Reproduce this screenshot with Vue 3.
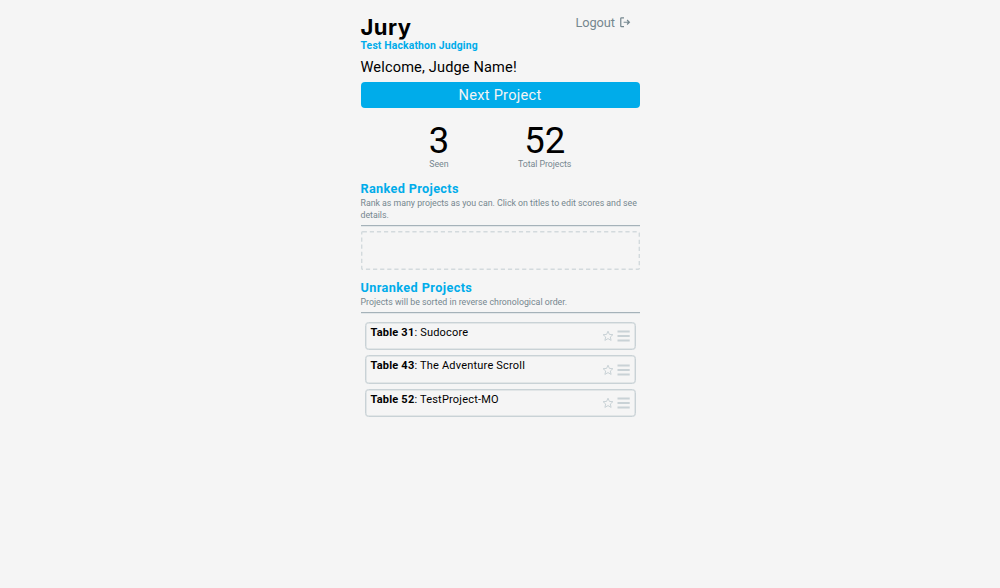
<script setup>
const stats = [
  { value: '3', label: 'Seen', kind: 'seen' },
  { value: '52', label: 'Total Projects', kind: 'total' },
]
const projects = [
  { table: 31, name: 'Sudocore' },
  { table: 43, name: 'The Adventure Scroll' },
  { table: 52, name: 'TestProject-MO' },
]
</script>

<template>
  <main class="page">
    <header class="header">
      <div>
        <h1>Jury</h1>
        <p class="event">Test Hackathon Judging</p>
      </div>
      <a class="logout">
        <span>Logout</span>
        <svg class="logout-icon" viewBox="0 0 11 11">
          <path d="M4.2 .8H1.6Q.8 .8 .8 1.6V9.4Q.8 10.2 1.6 10.2H4.2M3.8 5.5H9.6M7.4 3.2L9.8 5.5L7.4 7.8" />
        </svg>
      </a>
    </header>
    <h2 class="welcome">Welcome, Judge Name!</h2>
    <button class="next">Next Project</button>
    <section class="stats">
      <div v-for="s in stats" :key="s.label" class="stat" :class="s.kind">
        <strong>{{ s.value }}</strong>
        <span>{{ s.label }}</span>
      </div>
    </section>
    <section class="ranked">
      <h3>Ranked Projects</h3>
      <p class="hint">Rank as many projects as you can. Click on titles to edit scores and see<br>details.</p>
      <div class="rule"></div>
      <svg class="drop" viewBox="0 0 279 39">
        <rect x=".7" y=".7" width="277.6" height="37.6" rx="1" />
      </svg>
    </section>
    <section>
      <h3 class="second">Unranked Projects</h3>
      <p class="hint last">Projects will be sorted in reverse chronological order.</p>
      <div class="rule"></div>
      <ul class="list">
        <li v-for="p in projects" :key="p.table" class="card">
          <p class="title"><b>Table {{ p.table }}</b>: {{ p.name }}</p>
          <svg class="star" viewBox="0 0 12 12">
            <path d="M6 1.2L7.4 4.4L10.9 4.7L8.3 7L9.1 10.4L6 8.6L2.9 10.4L3.7 7L1.1 4.7L4.6 4.4Z" />
          </svg>
          <svg class="grip" viewBox="0 0 13 12">
            <path d="M.5 1.5H12.7M.5 6H12.7M.5 10.5H12.7" />
          </svg>
        </li>
      </ul>
    </section>
  </main>
</template>

<style>
body { background: #f5f5f5; }
</style>

<style scoped>
h1, h2, h3, p, ul { margin: 0; padding: 0; font-weight: 400; }
.page {
  width: 279px;
  margin: 0 auto;
  padding-top: 15px;
  font-family: Roboto, "Liberation Sans", sans-serif;
  color: #000;
}
.header { display: flex; justify-content: space-between; height: 41px; }
h1 { font: 700 22px/24px Inter, Roboto, sans-serif; letter-spacing: .5px; }
.event { font-size: 10.4px; line-height: 14px; font-weight: 700; letter-spacing: .15px; color: #00acea; }
.logout { display: flex; height: 15px; align-items: center; gap: 5px; margin-right: 9px; font-size: 12.8px; letter-spacing: -.05px; color: #75878f; }
.logout-icon { width: 10.5px; height: 10.5px; }
svg { fill: none; stroke: #75878f; stroke-width: 1.3; display: block; flex: none; }
.welcome { height: 25.5px; font-size: 14.6px; line-height: 23px; letter-spacing: .14px; }
.next {
  display: block; width: 100%; height: 26.5px; border: 0; border-radius: 4px; padding: 0;
  background: #00acea; color: #f4f4f4; font: 400 14.6px/26px Roboto, sans-serif; letter-spacing: .27px;
}
.stats { display: flex; height: 74px; padding-top: 15px; box-sizing: border-box; justify-content: center; gap: 69px; }
.stat { display: flex; flex-direction: column; align-items: center; }
.stat strong { font-size: 36.5px; line-height: 35.5px; font-weight: 400; letter-spacing: -.2px; }
.stat span { font-size: 8.8px; line-height: 11.5px; letter-spacing: -.06px; color: #75878f; white-space: nowrap; }
.ranked { height: 98.5px; }
h3 { font-size: 12.7px; line-height: 14px; font-weight: 700; letter-spacing: .34px; color: #00acea; }
.second { letter-spacing: .4px; }
.hint { font-size: 8.8px; line-height: 12px; padding-top: 1px; letter-spacing: -.02px; color: #75878f; white-space: nowrap; }
.last { letter-spacing: .005px; }
.rule { height: 1px; margin-top: 4px; background: #a5b2b9; box-shadow: 0 1px 0 #e3e7e9; }
.drop { margin-top: 5px; width: 279px; height: 39px; stroke: #d3dadd; stroke-width: 1.4; }
.drop rect { stroke-dasharray: 4.2 2.9; }
.list { list-style: none; padding: 9px 4px 0; }
.card {
  display: flex; height: 28.8px; box-sizing: border-box; margin-bottom: 4.8px; padding: 0 5px;
  border: 1px solid #c9d2d6; border-radius: 3.5px; box-shadow: inset 0 0 0 .5px #cfd7da;
}
.title { flex: 1; font-size: 11px; line-height: 20.6px; letter-spacing: .2px; }
.star { width: 12px; height: 12px; margin: 7.5px 2.7px 0 0; stroke: #c9d2d6; stroke-width: 1; }
.grip { width: 13px; height: 12px; margin-top: 7.5px; stroke: #c9d2d6; stroke-width: 2; }
</style>
